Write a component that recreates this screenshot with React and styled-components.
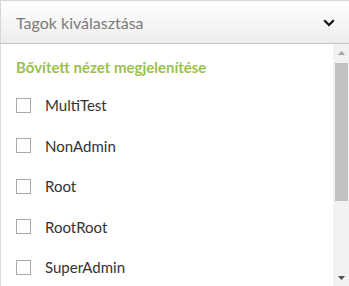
import React from "react";
import styled, { createGlobalStyle } from "styled-components";

const Global = createGlobalStyle`
  html, body { margin: 0; padding: 0; background: #fff; }
  body { font-family: Lato, "Open Sans", sans-serif; }
`;

const Wrap = styled.div`
  width: 349px;
  height: 286px;
  display: flex;
  flex-direction: column;
  box-sizing: border-box;
  overflow: hidden;
`;

const Header = styled.div`
  height: 44px;
  flex: none;
  box-sizing: border-box;
  border-top: 1px solid #d6d6d6;
  border-left: 1px solid #d6d6d6;
  border-bottom: 1px solid #c4c4c4;
  background: linear-gradient(#ffffff, #ededed);
  display: flex;
  align-items: center;
  justify-content: space-between;
  padding: 1px 14px 0 15px;
`;

const Placeholder = styled.span`
  font-family: Lato, sans-serif;
  font-size: 16px;
  color: #7a7a7a;
`;

const Panel = styled.div`
  flex: 1;
  display: flex;
  border-left: 1px solid #dcdcdc;
  min-height: 0;
`;

const List = styled.div`
  flex: 1;
  padding: 12px 0 0 15px;
  display: flex;
  flex-direction: column;
  overflow: hidden;
`;

const Toggle = styled.div`
  flex: none;
  font-family: Lato, sans-serif;
  font-weight: 700;
  font-size: 15px;
  color: #9cc147;
  height: 22px;
  line-height: 22px;
  margin-bottom: 7px;
`;

const Row = styled.label`
  flex: none;
  display: flex;
  align-items: center;
  height: 40.5px;
  gap: 14px;
  font-family: Lato, sans-serif;
  font-size: 15px;
  color: #333;
`;

const Box = styled.span`
  width: 15px;
  height: 15px;
  box-sizing: border-box;
  border: 1px solid #a9a9a9;
  background: #fff;
  flex: none;
`;

const Scrollbar = styled.div`
  width: 16px;
  flex: none;
  background: #f1f1f1;
  display: flex;
  flex-direction: column;
  align-items: center;
`;

const Arrow = styled.div`
  height: 17px;
  width: 100%;
  display: flex;
  align-items: center;
  justify-content: center;
  flex: none;
`;

const Thumb = styled.div`
  width: 13px;
  height: 138px;
  background: #c1c1c1;
  margin-top: 2px;
`;

const Spacer = styled.div`
  flex: 1;
`;

const items = ["MultiTest", "NonAdmin", "Root", "RootRoot", "SuperAdmin"];

export default function App() {
  return (
    <>
      <Global />
      <Wrap>
        <Header>
          <Placeholder>Tagok kiválasztása</Placeholder>
          <svg width="12" height="8" viewBox="0 0 12 8">
            <path d="M1.2 1.2 L6 6 L10.8 1.2" fill="none" stroke="#111" strokeWidth="2.2" />
          </svg>
        </Header>
        <Panel>
          <List>
            <Toggle>Bővített nézet megjelenítése</Toggle>
            {items.map((t) => (
              <Row key={t}>
                <Box />
                {t}
              </Row>
            ))}
          </List>
          <Scrollbar>
            <Arrow>
              <svg width="7" height="4" viewBox="0 0 7 4"><path d="M0 4 L3.5 0 L7 4Z" fill="#a3a3a3" /></svg>
            </Arrow>
            <Thumb />
            <Spacer />
            <Arrow>
              <svg width="7" height="4" viewBox="0 0 7 4"><path d="M0 0 L3.5 4 L7 0Z" fill="#505050" /></svg>
            </Arrow>
          </Scrollbar>
        </Panel>
      </Wrap>
    </>
  );
}
